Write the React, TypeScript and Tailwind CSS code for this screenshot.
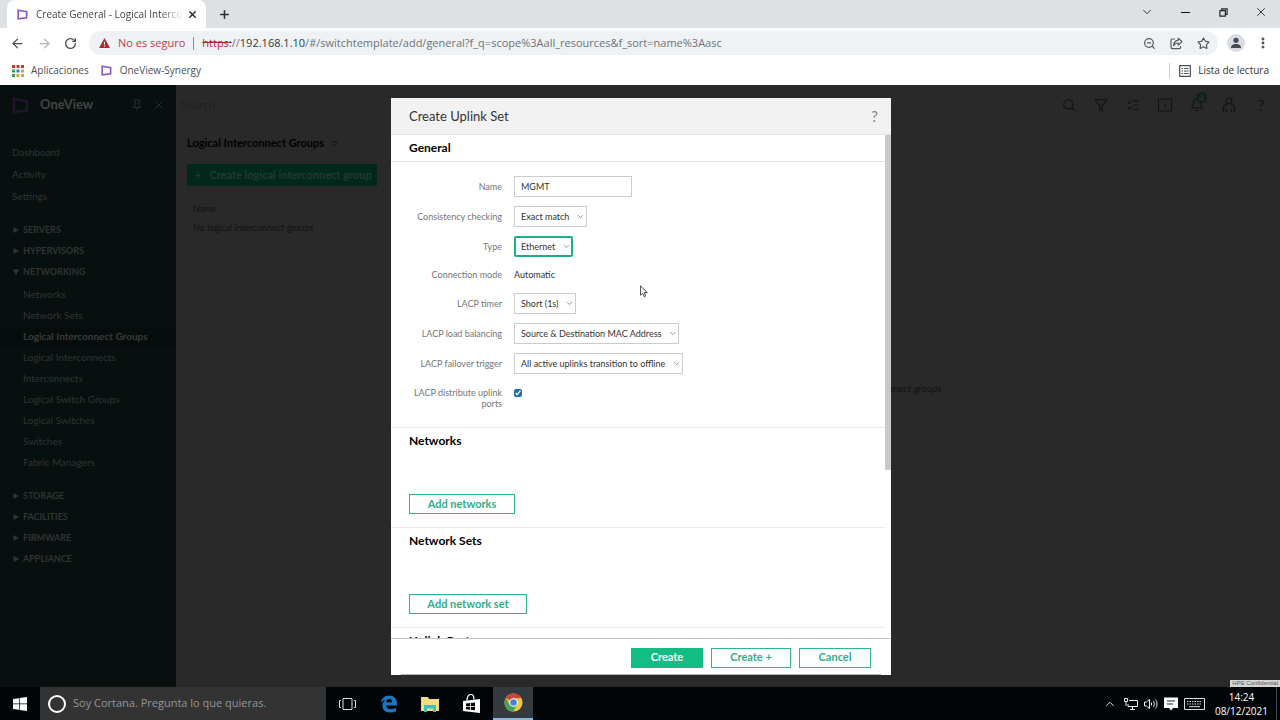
import React from 'react'
import {
  Bell, ChevronDown, ChevronUp, Filter, ListChecks, MoreVertical, Pin,
  Plus, RotateCw, Search, Star, X, ZoomOut, ArrowLeft, ArrowRight,
} from 'lucide-react'

const links = ['Dashboard', 'Activity', 'Settings']
const groupsTop = ['SERVERS', 'HYPERVISORS']
const networking = [
  'Networks', 'Network Sets', 'Logical Interconnect Groups', 'Logical Interconnects', 'Interconnects',
  'Logical Switch Groups', 'Logical Switches', 'Switches', 'Fabric Managers',
]
const groupsBottom = ['STORAGE', 'FACILITIES', 'FIRMWARE', 'APPLIANCE']

const Logo = ({ className = '' }: { className?: string }) => (
  <svg viewBox="0 0 12 12" className={className} fill="none" stroke="currentColor" strokeWidth="1.8">
    <path d="M1.3 1.3 10.5 3v6.5L1.3 10.8Z" />
  </svg>
)

const AppsGrid = () => (
  <svg viewBox="0 0 12 12" className="size-3 shrink-0">
    {['#c5392f', '#c5392f', '#c5392f', '#3f9a55', '#3b78c4', '#d9a62b', '#3f9a55', '#d9a62b', '#d9a62b'].map((c, i) => (
      <rect key={i} x={(i % 3) * 4.5} y={Math.floor(i / 3) * 4.5} width="3" height="3" fill={c} />
    ))}
  </svg>
)

const Browser = () => (
  <header className="shrink-0 font-['Open_Sans',sans-serif] text-[#4a4f53]">
    {/* Tab strip */}
    <div className="flex h-7 bg-[#dee1e3] pl-[7px]">
      <div className="flex w-[199px] items-center rounded-t-lg bg-white pr-2 pl-[10px]">
        <Logo className="size-[11px] shrink-0 text-[#8a55c8]" />
        <span className="ml-2 flex-1 overflow-hidden text-[10px] leading-4 whitespace-nowrap text-[#3f4347] [mask-image:linear-gradient(to_right,black_85%,transparent)]">
          Create General - Logical Intercon
        </span>
        <button aria-label="Close tab" className="ml-1"><X className="size-[11px] text-[#222]" strokeWidth={3} /></button>
      </div>
      <button aria-label="New tab" className="ml-3"><Plus className="size-[13px] text-[#333]" strokeWidth={3} /></button>
      <div className="ml-auto flex items-center pb-1 text-[#222]">
        <button aria-label="Tab search" className="flex w-[38px] justify-center"><ChevronDown className="size-[14px]" strokeWidth={1.5} /></button>
        <button aria-label="Minimize" className="flex w-[38px] justify-center"><span className="h-px w-[9px] bg-[#111]" /></button>
        <button aria-label="Restore" className="flex w-[38px] justify-center">
          <svg viewBox="0 0 10 10" className="size-[9px]" fill="none" stroke="currentColor" strokeWidth="1.3"><path d="M1 3h6v6H1zM3 3V1h6v6H7" /></svg>
        </button>
        <button aria-label="Close" className="flex w-[38px] justify-center"><X className="size-[14px]" strokeWidth={1.5} /></button>
      </div>
    </div>
    {/* Toolbar */}
    <div className="flex h-7 items-center bg-white pt-[2px] pr-[10px] pl-[10px]">
      <button aria-label="Back" className="mr-3"><ArrowLeft className="size-[15px]" strokeWidth={2} /></button>
      <button aria-label="Forward" className="mr-3"><ArrowRight className="size-[15px] text-[#b0b4b7]" strokeWidth={2} /></button>
      <button aria-label="Reload" className="mr-3"><RotateCw className="size-[13px]" strokeWidth={2.4} /></button>
      <div className="flex h-6 flex-1 items-center rounded-full bg-[#eff2f4] pr-2 pl-[10px] text-[11px]">
        <svg viewBox="0 0 12 11" className="h-[10px] w-[11px] shrink-0"><path d="M6 0 12 11H0Z" fill="#b3262d" /><path d="M6 4v3.4M6 8.4v1.2" stroke="#fff" strokeWidth="1.2" /></svg>
        <span className="ml-2 text-[#b5434a]">No es seguro</span>
        <span className="mx-2 h-[13px] w-px bg-[#8a8f93]" />
        <span className="flex-1 text-[#6e7377]">
          <s className="text-[#b3262d]">https:</s>//<span className="text-[#33373b]">192.168.1.10</span>/#/switchtemplate/add/general?f_q=scope%3Aall_resources&amp;f_sort=name%3Aasc
        </span>
        <span className="flex items-center gap-[14px] text-[#555a5f]">
          <ZoomOut className="size-[13px]" strokeWidth={2.2} />
          <svg viewBox="0 0 13 13" className="size-[13px]" fill="none" stroke="currentColor" strokeWidth="1.2" strokeLinejoin="round">
            <path d="M5 2H2.3Q1 2 1 3.3v7Q1 11.600 2.3 11.600h7q1.3 0 1.3-1.3V9" />
            <path d="M8.3 1.2 12 4.6 8.3 8V6Q5 6 3.6 8.6 4 3.8 8.3 3.2Z" />
          </svg>
          <Star className="size-[13px]" strokeWidth={2.2} />
        </span>
      </div>
      <span className="ml-[9px] flex size-[18px] items-center justify-center rounded-full bg-[#d9dde4]">
        <svg viewBox="0 0 12 12" className="size-3" fill="#454b55"><circle cx="6" cy="3.3" r="2.6" /><path d="M1 11c0-3 2-4 5-4s5 1 5 4z" /></svg>
      </span>
      <button aria-label="Menu" className="ml-[11px]"><MoreVertical className="size-[14px]" strokeWidth={3} /></button>
    </div>
    {/* Bookmarks */}
    <div className="flex h-[29px] items-center bg-white pr-[11px] pl-3 text-[10px]">
      <AppsGrid />
      <a href="#apps" className="ml-[7px]">Aplicaciones</a>
      <Logo className="ml-3 size-[11px] text-[#8a55c8]" />
      <a href="#oneview" className="ml-2">OneView-Synergy</a>
      <span className="ml-auto h-[15px] w-px bg-[#ccc]" />
      <svg viewBox="0 0 12 12" className="ml-[9px] size-3" fill="none" stroke="currentColor" strokeWidth="1.2"><path d="M.7.7h10.6v10.6H.7zM2.5 3.5H4M2.5 6H4M2.5 8.5H4M5 3.5h4.5M5 6h4.5M5 8.5h4.5" /></svg>
      <span className="ml-[7px] text-[#333]">Lista de lectura</span>
    </div>
  </header>
)

const Arrow = ({ open = false }: { open?: boolean }) => (
  <svg viewBox="0 0 6 6" className="mr-1 ml-[13px] size-[6px]" fill="#2f3634"><path d={open ? 'M0 .5h6L3 6z' : 'M.5 0 6 3 .5 6z'} /></svg>
)

const Group = ({ name, open }: { name: string; open?: boolean }) => (
  <button className="flex h-[21px] items-center text-[9px] font-bold"><Arrow open={open} />{name}</button>
)

const Sidebar = () => (
  <nav className="flex w-44 shrink-0 flex-col bg-[#07100f] text-[#2f3534]">
    <div className="flex h-10 items-center pr-[10px] pl-3">
      <Logo className="size-[17px] text-[#22132c]" />
      <span className="ml-[11px] text-[13px] font-bold text-[#444]">OneView</span>
      <button aria-label="Pin" className="mr-[9px] ml-auto"><Pin className="size-3" /></button>
      <button aria-label="Close menu"><X className="size-[14px]" strokeWidth={1.5} /></button>
    </div>
    <div className="mt-4 flex flex-col pl-3">
      {links.map(l => <a key={l} href={'#' + l} className="flex h-[22px] items-center text-[10px]">{l}</a>)}
    </div>
    <div className="mt-3 flex flex-col">
      {groupsTop.map(g => <Group key={g} name={g} />)}
      <Group name="NETWORKING" open />
      <div className="mt-[2px] flex flex-col">
        {networking.map(n => (
          <a key={n} href={'#' + n.replace(/ /g, '-')} className={n === 'Logical Interconnect Groups'
            ? 'flex h-[21px] items-center bg-[#070d0c] pl-[23px] text-[10px] font-bold text-[#383d3c]'
            : 'flex h-[21px] items-center pl-[23px] text-[10px]'}>{n}</a>
        ))}
      </div>
    </div>
    <div className="mt-3 flex flex-col">
      {groupsBottom.map(g => <Group key={g} name={g} />)}
    </div>
  </nav>
)

const Page = () => (
  <main className="flex min-w-0 flex-1 flex-col bg-[#292929] text-[#111]">
    <div className="flex h-10 items-center pr-3 pl-1">
      <input aria-label="Search" placeholder="Search" className="w-40 bg-transparent text-[12px] placeholder:text-[#1f1f1f]" />
      <div className="ml-auto flex items-center gap-[18px] text-[#121212]">
        <Search className="size-[14px]" strokeWidth={2} />
        <Filter className="size-[14px]" strokeWidth={2} />
        <ListChecks className="size-[14px]" strokeWidth={2} />
        <svg viewBox="0 0 14 14" className="size-[14px]" fill="none" stroke="currentColor"><path d="M.5 1h13v12H.5zM7 4v1M7 6v4.5" /></svg>
        <span className="relative">
          <Bell className="size-[14px]" strokeWidth={2} />
          <span className="absolute -top-[6px] left-[6px] flex size-[11px] items-center justify-center rounded-full bg-[#12211c] text-[8px] text-[#2f3a36]">4</span>
        </span>
        <svg viewBox="0 0 14 16" className="h-4 w-[14px]" fill="none" stroke="currentColor" strokeWidth="1.2">
          <circle cx="7" cy="4" r="3" /><path d="M1.5 15v-3.5Q1.5 8 5 7.5M12.5 15v-3.5Q12.5 8 9 7.5M4.5 15v-3M9.5 15v-3" />
        </svg>
        <span className="w-[14px] text-center text-[15px]">?</span>
      </div>
    </div>
    <div className="flex flex-1">
      <section className="w-[212px] pl-[11px]">
        <h1 className="mt-2 flex h-5 items-center gap-2 text-[11px] font-bold text-black">Logical Interconnect Groups
          <span className="size-[5px] rounded-full border border-[#111]" />
        </h1>
        <button className="mt-[11px] flex h-[22px] w-[190px] items-center gap-2 bg-[#02281b] pl-2 text-[11px] font-bold text-[#213b31]">
          <span>+</span>Create logical interconnect group
        </button>
        <table className="mt-[14px] ml-[6px] text-left text-[9px]">
          <thead><tr><th className="h-[18px] p-0 font-normal">Name</th></tr></thead>
          <tbody><tr><td className="h-[19px] p-0">No logical interconnect groups</td></tr></tbody>
        </table>
      </section>
      <section className="flex-1 pt-[256px] pl-[428px] text-[10px] italic">
        <p>No logical interconnect groups</p>
      </section>
    </div>
  </main>
)

const Row = ({ id, label, children }: { id: string; label: string; children: React.ReactNode }) => (
  <div className="grid min-h-[18px] grid-cols-[93px_1fr] items-center gap-3">
    <label htmlFor={id} className="text-right whitespace-nowrap text-[#757575]">{label}</label>
    <div className="flex text-[#333]">{children}</div>
  </div>
)

const Select = ({ id, value, active }: { id: string; value: string; active?: boolean }) => (
  <span className="relative inline-flex items-center">
    <select id={id} className={active
      ? 'h-[21px] appearance-none rounded-xs border-2 border-[#1fae85] bg-white pr-[15px] pl-[5px] outline-none'
      : 'h-[21px] appearance-none border border-[#ccc] bg-white pr-4 pl-[6px] outline-none'}>
      <option>{value}</option>
    </select>
    <ChevronDown className="pointer-events-none absolute right-[2px] size-[9px] text-[#777]" strokeWidth={2} />
  </span>
)

const outline = 'h-5 border border-[#2fb58c] text-[11px] font-bold text-[#2fae87]'

const AddSection = ({ title, action, wide }: { title: string; action: string; wide?: boolean }) => (
  <section className="flex h-[100px] shrink-0 flex-col items-start border-b border-[#e8e8e8] px-[18px] pt-[3px]">
    <h3 className="text-[12px] leading-5 font-bold text-black">{title}</h3>
    <button className={outline + (wide ? ' mt-[43px] w-[118px]' : ' mt-[43px] w-[106px]')}>{action}</button>
  </section>
)

const Dialog = () => (
  <div role="dialog" aria-label="Create Uplink Set" className="flex w-[500px] flex-col bg-white">
    <div className="flex h-[37px] shrink-0 items-center justify-between border-b border-[#e4e4e4] bg-[#f2f2f2] pt-px pr-[13px] pl-[18px]">
      <h2 className="text-[13px] text-[#333]">Create Uplink Set</h2>
      <button className="text-[15px] text-[#888]">?</button>
    </div>
    <div className="flex min-h-0 flex-1">
      <div className="flex flex-1 flex-col overflow-hidden">
        <h3 className="flex h-[27px] shrink-0 items-center border-b border-[#e2e2e2] pl-[18px] text-[12px] font-bold text-black">General</h3>
        <form className="flex h-[266px] shrink-0 flex-col gap-[9px] border-b border-[#e8e8e8] pt-[14px] pl-[18px] text-[9px]">
          <Row id="name" label="Name">
            <input id="name" defaultValue="MGMT" className="h-[21px] w-[118px] border border-[#ccc] px-[6px] outline-none" />
          </Row>
          <Row id="check" label="Consistency checking"><Select id="check" value="Exact match" /></Row>
          <Row id="type" label="Type"><Select id="type" value="Ethernet" active /></Row>
          <Row id="mode" label="Connection mode"><output id="mode">Automatic</output></Row>
          <Row id="timer" label="LACP timer"><Select id="timer" value="Short (1s)" /></Row>
          <Row id="balance" label="LACP load balancing"><Select id="balance" value="Source &amp; Destination MAC Address" /></Row>
          <Row id="trigger" label="LACP failover trigger"><Select id="trigger" value="All active uplinks transition to offline" /></Row>
          <div className="grid grid-cols-[93px_1fr] gap-3 pt-1">
            <label htmlFor="ports" className="text-right leading-[11px] text-[#757575]">LACP distribute uplink ports</label>
            <input id="ports" type="checkbox" defaultChecked className="mt-[2px] size-2 accent-[#1c6fb5]" />
          </div>
        </form>
        <AddSection title="Networks" action="Add networks" />
        <AddSection title="Network Sets" action="Add network set" wide />
        <AddSection title="Uplink Ports" action="Add uplink ports" wide />
      </div>
      <div className="w-[6px]"><div className="h-2/3 bg-[#c9c9c9]" /></div>
    </div>
    <div className="flex h-9 shrink-0 items-center justify-end gap-2 border-t border-[#c4c4c4] pt-[2px] pr-5">
      <button className="h-5 w-[72px] bg-[#12bd83] text-[11px] font-bold text-white">Create</button>
      <button className={outline + ' w-20'}>Create +</button>
      <button className={outline + ' w-[72px]'}>Cancel</button>
    </div>
    <div className="mx-[10px] h-px shrink-0 bg-[#b5b5b5]" />
  </div>
)

const Taskbar = () => (
  <footer className="flex h-[33px] shrink-0 bg-[#010507] font-['Open_Sans',sans-serif] text-white">
    <button aria-label="Start" className="flex w-10 items-center justify-center">
      <svg viewBox="0 0 14 14" className="size-[14px]" fill="#fff"><path d="M0 2 6 1.2v5.4H0zM6.7 1.1 14 0v6.6H6.7zM0 7.3h6v5.4L0 12zM6.7 7.3H14V14l-7.3-1z" /></svg>
    </button>
    <label className="flex w-[286px] items-center bg-[#333] pl-2">
      <span className="size-[18px] rounded-full border-2 border-white" />
      <input placeholder="Soy Cortana. Pregunta lo que quieras." className="ml-[7px] flex-1 bg-transparent text-[11px] outline-none placeholder:text-[#959595]" />
    </label>
    <button aria-label="Task view" className="flex w-[42px] items-center justify-center">
      <svg viewBox="0 0 17 12" className="h-3 w-[17px]" fill="none" stroke="#ddd"><path d="M4 .5h9v11H4zM2 2.5H.5v7H2M15 2.5h1.5v7H15" /></svg>
    </button>
    <button aria-label="Edge" className="flex w-[42px] items-center justify-center">
      <svg viewBox="0 0 18 18" className="size-[18px]" fill="#1f74bd"><path d="M.8 8C1.3 3.5 4.5.5 9 .5c5 0 8 3.5 8 8v2H6.2c.1 2.5 2 3.6 4.6 3.6 2 0 3.7-.5 5.2-1.4v3.6c-1.6.8-3.5 1.2-5.6 1.2-5 0-8-2.6-8-7 0-2.6 1.3-4.7 3.6-6C3.8 5.1 2.1 6.1.8 8m5.5-.8H12c0-2-.9-3.1-2.7-3.1-1.7 0-2.8 1.2-3 3.1" /></svg>
    </button>
    <button aria-label="Files" className="flex w-10 items-center justify-center">
      <svg viewBox="0 0 18 16" className="h-4 w-[18px]"><path d="M0 1h7l1 2h10v12H0z" fill="#f3dd82" /><path d="M3 9h12v7h-3v-3.5H6V16H3z" fill="#3fc0bd" /></svg>
    </button>
    <button aria-label="Store" className="flex w-[43px] items-center justify-center">
      <svg viewBox="0 0 18 20" className="h-5 w-[18px]"><path d="M0 7 17 5v14L0 17z" fill="#fff" /><path d="M4 6.5C4 2 6 .5 8 .5s3 1.5 3 5" fill="none" stroke="#fff" strokeWidth="1.2" /><path d="M3 9.5 7 9v3H3zM7.8 9l4.2-.5V12H7.8zM3 12.7h4v3l-4-.4zM7.8 12.7H12v3.5l-4.2-.4z" fill="#010507" /></svg>
    </button>
    <button aria-label="Chrome" className="flex w-10 items-center justify-center border-b-2 border-[#86b9e2] bg-[#343a3f]">
      <svg viewBox="0 0 20 20" className="size-[19px]">
        <circle cx="10" cy="10" r="9.5" fill="#f1c843" />
        <path d="M10 10 1.8 5.2A9.5 9.5 0 0 1 18.3 5.5H10z" fill="#cf4537" />
        <path d="M1.8 5.2A9.5 9.5 0 0 0 9.5 19.5L14 12 10 10 6 12.2z" fill="#4a9f54" />
        <circle cx="10" cy="10" r="4.5" fill="#fff" /><circle cx="10" cy="10" r="3.5" fill="#4b82d8" />
      </svg>
    </button>
    <div className="ml-auto flex items-center">
      <ChevronUp className="mr-[7px] size-[14px]" strokeWidth={1.5} />
      <svg viewBox="0 0 14 12" className="mr-[6px] h-3 w-[14px]" fill="none" stroke="#eee"><path d="M5 2.5h8.5v6H4V6M6 11.5h5M8.5 8.5v3M.5.5h3v3h-3zM2 3.5V8" /></svg>
      <svg viewBox="0 0 14 12" className="mr-[6px] h-3 w-[14px]" fill="none" stroke="#eee"><path d="M.5 4v4h2L5.5 10.5v-9L2.5 4zM7.5 4.5v3M9.5 3c1 1.5 1 4.5 0 6M11.5 1.5c2 2 2 7 0 9" /></svg>
      <svg viewBox="0 0 14 14" className="mr-[6px] size-[14px]"><path d="M0 .5h14v10.5H9L7 13.5 5 11H0z" fill="#fff" /><path d="M3 4h8M3 7h6" stroke="#222" /></svg>
      <svg viewBox="0 0 21 12" className="mr-[10px] h-3 w-[21px]" fill="none" stroke="#ddd"><path d="M.5.5h20v11H.5z" /><path d="M3 3.5h15M3 6h15" strokeDasharray="1.5 1" /><path d="M5 8.7h11" /></svg>
      <div className="text-center text-[10px] leading-[14px]"><p>14:24</p><p>08/12/2021</p></div>
      <span className="mr-[3px] ml-2 h-[33px] w-px bg-[#444]" />
    </div>
  </footer>
)

const App = () => (
  <div className="flex h-screen flex-col overflow-hidden">
    <Browser />
    <div className="relative flex min-h-0 flex-1 overflow-hidden font-[Lato,sans-serif]">
      <Sidebar />
      <Page />
      <div className="absolute inset-0 flex justify-center pt-[13px] pb-3 pl-[2px]"><Dialog /></div>
      <svg viewBox="0 0 9 14" className="absolute top-[200px] left-1/2 h-[13px] w-2" fill="#fff" stroke="#333"><path d="M.5.7v10.5L3 9l1.8 4 1.6-.8L4.8 8.3h3.5z" /></svg>
      <span className="absolute right-0 bottom-0 bg-[#d5d5d5] px-[2px] font-['Liberation_Sans',sans-serif] text-[6px] leading-[7px] text-[#555]">HPE Confidential</span>
    </div>
    <Taskbar />
  </div>
)

export default App
